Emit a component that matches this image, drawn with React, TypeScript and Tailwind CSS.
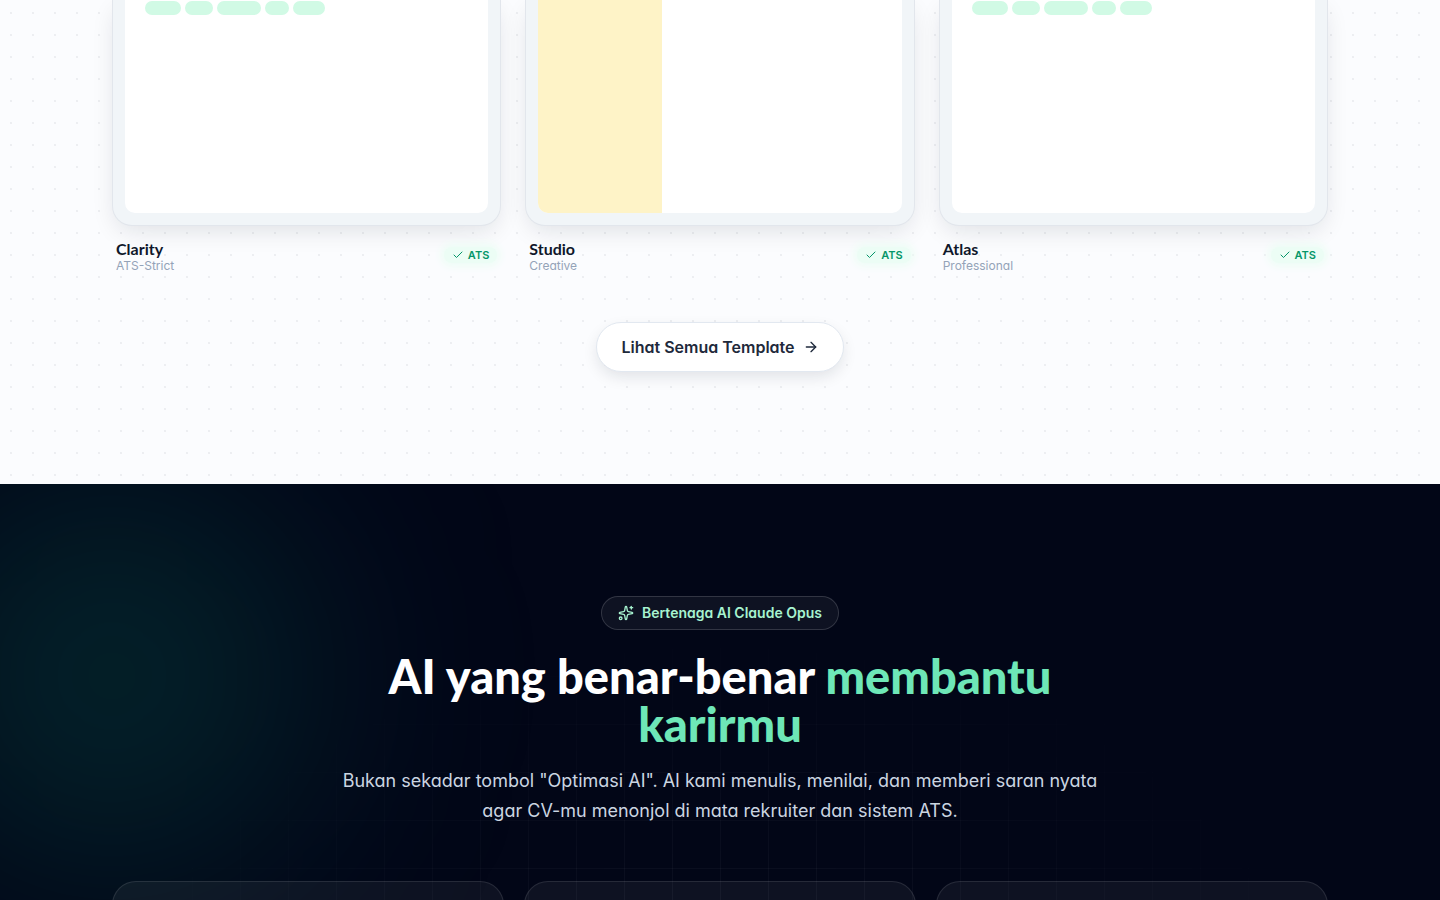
import React from 'react';
import { ArrowRight, Check, Sparkles } from 'lucide-react';

const templates = [
  { name: 'Clarity', category: 'ATS-Strict', sidebar: false },
  { name: 'Studio', category: 'Creative', sidebar: true },
  { name: 'Atlas', category: 'Professional', sidebar: false },
];

const SkillPills: React.FC = () => (
  <div className="flex gap-1 px-5 pt-px">
    <span className="h-3.5 w-9 rounded-full bg-[#d1fae5]" />
    <span className="h-3.5 w-7 rounded-full bg-[#d1fae5]" />
    <span className="h-3.5 w-11 rounded-full bg-[#d1fae5]" />
    <span className="h-3.5 w-6 rounded-full bg-[#d1fae5]" />
    <span className="h-3.5 w-8 rounded-full bg-[#d1fae5]" />
  </div>
);

const TemplateCard: React.FC<{ name: string; category: string; sidebar: boolean }> = ({ name, category, sidebar }) => (
  <article>
    <div className="rounded-b-[20px] border border-t-0 border-[#e2e6ec] bg-[#f1f5f8] px-3 pb-3 shadow-[0_8px_24px_-4px_rgba(15,23,42,0.12)]">
      <div className="h-[213px] overflow-hidden rounded-b-[10px] bg-white">
        {sidebar ? <div className="h-full w-[34%] bg-[#fef3c7]" /> : <SkillPills />}
      </div>
    </div>
    <div className="mt-3 flex items-center justify-between px-1">
      <div>
        <h3 className="font-['Lato',sans-serif] text-base leading-[22px] font-bold text-[#0f172a]">{name}</h3>
        <p className="text-xs leading-3 text-[#94a3b8]">{category}</p>
      </div>
      <span className="flex items-center gap-1 rounded-full bg-[#ecfdf5] px-2 text-[11px] leading-4 font-semibold text-[#059669] shadow-[0_0_8px_3px_#ecfdf5]">
        <Check className="size-3" strokeWidth={2} />
        ATS
      </span>
    </div>
  </article>
);

const App: React.FC = () => {
  return (
    <div className="font-['Inter',sans-serif] [font-feature-settings:'cv11']">
      <section className="bg-[#fbfcfe] bg-[radial-gradient(rgba(15,23,42,0.06)_1px,transparent_1px)] bg-size-[22px_22px] bg-position-[0_2px] pb-28">
        <div className="mx-auto max-w-7xl px-8">
          <div className="grid grid-cols-3 gap-6">
            {templates.map((template) => (
              <TemplateCard key={template.name} {...template} />
            ))}
          </div>
          <div className="mt-[50px] flex justify-center">
            <button className="flex items-center gap-2 rounded-full border border-[#e2e8f0] bg-white px-6 py-3 font-semibold text-[#1e293b] shadow-[0_6px_16px_-2px_rgba(15,23,42,0.12)]">
              Lihat Semua Template
              <ArrowRight className="size-4" />
            </button>
          </div>
        </div>
      </section>

      <section className="relative h-[416px] overflow-hidden bg-[#020617] pt-28">
        <div className="absolute top-0 -left-20 size-96 rounded-full bg-[#10b990]/18 blur-[120px]" />
        <div className="absolute inset-0 bg-[linear-gradient(rgba(255,255,255,0.05)_1px,transparent_1px),linear-gradient(90deg,rgba(255,255,255,0.05)_1px,transparent_1px)] bg-size-[48px_48px] mask-[radial-gradient(640px_420px_at_50%_540px,black_10%,transparent)]" />

        <div className="relative mx-auto max-w-7xl px-8">
          <div className="mx-auto flex max-w-3xl flex-col items-center text-center">
            <span className="flex items-center gap-2 rounded-full border border-white/15 bg-white/5 px-4 py-1.5 text-sm font-semibold text-[#a7f3d0]">
              <Sparkles className="size-4" />
              Bertenaga AI Claude Opus
            </span>
            <h2 className="mt-[22px] font-['Lato',sans-serif] text-[47px] leading-12 font-black text-white">
              AI yang benar-benar <span className="text-[#6ee7b7]">membantu</span>{' '}
              <span className="text-[#6ee7b7]">karirmu</span>
            </h2>
            <p className="mt-[18px] text-lg leading-[30px] text-[#cbd5e1]">
              Bukan sekadar tombol "Optimasi AI". AI kami menulis, menilai, dan memberi saran nyata agar CV-mu menonjol di mata rekruiter dan sistem ATS.
            </p>
          </div>
          <div className="mt-[55px] grid grid-cols-3 gap-5">
            <div className="h-60 rounded-3xl border border-white/10 bg-white/5" />
            <div className="h-60 rounded-3xl border border-white/10 bg-white/5" />
            <div className="h-60 rounded-3xl border border-white/10 bg-white/5" />
          </div>
        </div>
      </section>
    </div>
  );
};

export default App;
